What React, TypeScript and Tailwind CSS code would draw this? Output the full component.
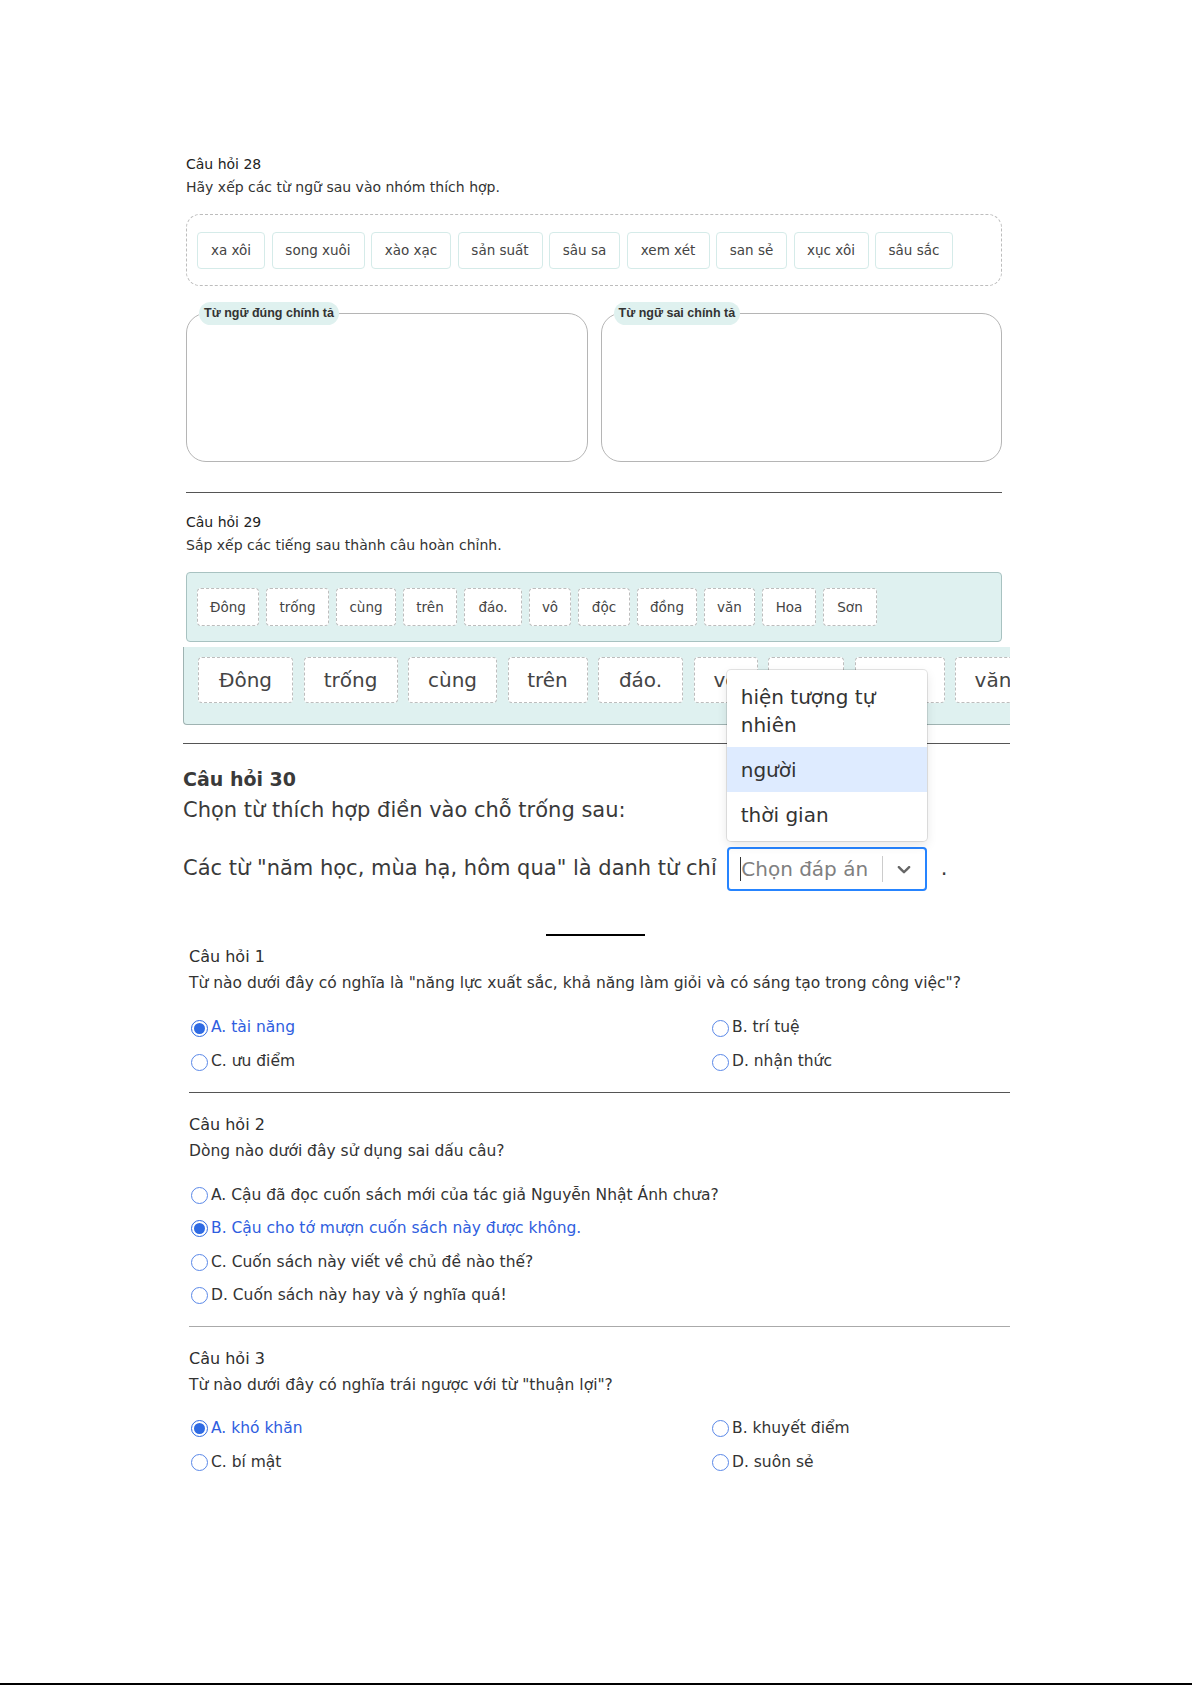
import React from 'react';

const words28 = [
    { t: 'xa xôi', w: 'w-[68px]' },
    { t: 'song xuôi', w: 'w-[93px]' },
    { t: 'xào xạc', w: 'w-[80px]' },
    { t: 'sản suất', w: 'w-[85px]' },
    { t: 'sâu sa', w: 'w-[71px]' },
    { t: 'xem xét', w: 'w-[83px]' },
    { t: 'san sẻ', w: 'w-[71px]' },
    { t: 'xục xôi', w: 'w-[75px]' },
    { t: 'sâu sắc', w: 'w-[78px]' },
];

const words29 = [
    { t: 'Đông', w: 'w-[62px]', big: 'w-[95px]' },
    { t: 'trống', w: 'w-[63px]', big: 'w-[94px]' },
    { t: 'cùng', w: 'w-[60px]', big: 'w-[89px]' },
    { t: 'trên', w: 'w-[54px]', big: 'w-[80px]' },
    { t: 'đáo.', w: 'w-[58px]', big: 'w-[85px]' },
    { t: 'vô', w: 'w-[42px]', big: 'w-[64px]' },
    { t: 'độc', w: 'w-[52px]', big: 'w-[76px]' },
    { t: 'đồng', w: 'w-[60px]', big: 'w-[90px]' },
    { t: 'văn', w: 'w-[51px]', big: 'w-[76px]' },
    { t: 'Hoa', w: 'w-[54px]', big: 'w-[80px]' },
    { t: 'Sơn', w: 'w-[54px]', big: 'w-[80px]' },
];

function Radio({ checked }: { checked?: boolean }) {
    return (
        <span className={`w-[17px] h-[17px] rounded-full flex items-center justify-center shrink-0 ${checked ? 'border-[1.5px] border-[#2f6be3]' : 'border border-[#5a88e8]'}`}>
            {checked && <span className="w-[11px] h-[11px] rounded-full bg-[#2f6be3]" />}
        </span>
    );
}

function Option({ label, checked }: { label: string; checked?: boolean }) {
    return (
        <div className="flex items-center gap-[3px] pl-[2px]">
            <Radio checked={checked} />
            <span className={`text-[15.5px] ${checked ? 'text-[#2f5ee0]' : 'text-[#333]'}`}>{label}</span>
        </div>
    );
}

function QuestionHead({ title, text, top }: { title: string; text: string; top: string }) {
    return (
        <>
            <h3 className={`${top} text-[16px] leading-[26px] text-[#2e2e2e]`}>{title}</h3>
            <p className="text-[15.5px] leading-[26px] text-[#333]">{text}</p>
        </>
    );
}

export default function App() {
    return (
        <div className="relative w-[1192px] h-[1685px] bg-white flex flex-col text-[#333] font-['DejaVu_Sans',sans-serif]">
            {/* Câu hỏi 28 */}
            <section className="ml-[186px] w-[816px] pt-[152px]">
                <h2 className="text-[14px] leading-[24px] text-[#222]">Câu hỏi 28</h2>
                <p className="text-[14px] leading-[22px]">Hãy xếp các từ ngữ sau vào nhóm thích hợp.</p>
                <div className="mt-[16px] h-[72px] border-[1.5px] border-dashed border-[#bdbdbd] rounded-[14px] pl-[10px] flex items-center gap-[6.5px]">
                    {words28.map(w => (
                        <div key={w.t} className={`${w.w} h-[37px] shrink-0 flex items-center justify-center border border-[#d5ebe9] rounded-[4px] text-[13.5px] text-[#444]`}>
                            {w.t}
                        </div>
                    ))}
                </div>
                <div className="mt-[16px] grid grid-cols-2 gap-[13px]">
                    {['Từ ngữ đúng chính tả', 'Từ ngữ sai chính tả'].map(l => (
                        <fieldset key={l} className="h-[160px] min-w-0 border-[1.5px] border-[#b5b5b5] rounded-[20px]">
                            <legend className="ml-[12px] px-[5px] h-[23px] leading-[23px] rounded-full bg-[#dff1ef] text-[12.5px] font-bold font-['Liberation_Sans',sans-serif] text-[#333]">
                                {l}
                            </legend>
                        </fieldset>
                    ))}
                </div>
                <div className="mt-[30px] border-t-[1.5px] border-[#555]" />
            </section>

            {/* Câu hỏi 29 */}
            <section className="ml-[186px] w-[816px]">
                <h2 className="mt-[17px] text-[14px] leading-[24px] text-[#222]">Câu hỏi 29</h2>
                <p className="text-[14px] leading-[22px]">Sắp xếp các tiếng sau thành câu hoàn chỉnh.</p>
                <div className="mt-[16px] h-[70px] bg-[#dff1f0] border border-[#a8c2c1] rounded-[4px] flex items-center pl-[10px] gap-[7px]">
                    {words29.map(w => (
                        <div key={w.t} className={`${w.w} h-[38px] shrink-0 flex items-center justify-center bg-white border border-dashed border-[#bdbdbd] rounded-[4px] text-[13.5px] text-[#444]`}>
                            {w.t}
                        </div>
                    ))}
                </div>
            </section>
            <div className="ml-[183px] w-[827px] mt-[5px] h-[78px] bg-[#dff1f0] border-l border-b border-[#9fb3b2] rounded-bl-[4px] overflow-hidden flex items-start pt-[10px] pl-[14px] gap-[10.5px]">
                {words29.map(w => (
                    <div key={w.t} className={`${w.big} h-[46px] shrink-0 flex items-center justify-center bg-white border border-dashed border-[#bdbdbd] rounded-[4px] text-[20px] text-[#444]`}>
                        {w.t}
                    </div>
                ))}
            </div>
            <div className="ml-[183px] w-[827px] mt-[18px] border-t-[1.5px] border-[#555]" />

            {/* Câu hỏi 30 */}
            <section className="ml-[183px]">
                <h2 className="mt-[21px] text-[19px] leading-[28px] font-bold text-[#3a3a3a]">Câu hỏi 30</h2>
                <p className="mt-[3px] text-[21px] leading-[28px] text-[#3a3a3a]">Chọn từ thích hợp điền vào chỗ trống sau:</p>
                <div className="mt-[23px] h-[44px] flex items-center text-[21px] text-[#3a3a3a]">
                    <span>Các từ "năm học, mùa hạ, hôm qua" là danh từ chỉ</span>
                    <div className="relative ml-[10px] w-[200px] h-[44px] border-2 border-[#2684ff] rounded-[4px] flex items-center">
                        <div className="flex-1 flex items-center pl-[11px]">
                            <span className="w-[1.5px] h-[24px] bg-[#333]" />
                            <span className="text-[20px] text-[#808080]">Chọn đáp án</span>
                        </div>
                        <span className="w-px h-[26px] bg-[#cccccc]" />
                        <div className="w-[42px] flex items-center justify-center text-[#666]">
                            <svg width="22" height="22" viewBox="0 0 20 20" fill="currentColor">
                                <path d="M4.516 7.548c0.436-0.446 1.043-0.481 1.576 0l3.908 3.747 3.908-3.747c0.533-0.481 1.141-0.446 1.574 0 0.436 0.445 0.408 1.197 0 1.615-0.406 0.418-4.695 4.502-4.695 4.502-0.217 0.223-0.502 0.335-0.787 0.335s-0.57-0.112-0.789-0.335c0 0-4.287-4.084-4.695-4.502s-0.436-1.17 0-1.615z" />
                            </svg>
                        </div>
                        <div className="absolute left-[-2px] bottom-[calc(100%+8px)] w-[200px] bg-white rounded-[4px] shadow-[0_0_0_1px_rgba(0,0,0,0.1),0_4px_11px_rgba(0,0,0,0.1)] py-[4px] z-10 text-[20px] leading-[28px] text-[#333]">
                            <div className="px-[14px] py-[8.5px]">hiện tượng tự nhiên</div>
                            <div className="px-[14px] py-[8.5px] bg-[#deebff]">người</div>
                            <div className="px-[14px] py-[8.5px]">thời gian</div>
                        </div>
                    </div>
                    <span className="ml-[14px]">.</span>
                </div>
            </section>
            <div className="ml-[546px] mt-[43px] w-[99px] h-[2px] bg-black" />

            {/* Câu hỏi 1 - 3 */}
            <section className="ml-[189px] w-[821px]">
                <QuestionHead top="mt-[8px]" title="Câu hỏi 1" text={'Từ nào dưới đây có nghĩa là "năng lực xuất sắc, khả năng làm giỏi và có sáng tạo trong công việc"?'} />
                <div className="mt-[15px] grid grid-cols-[521px_1fr] auto-rows-[34px]">
                    <Option checked label="A. tài năng" />
                    <Option label="B. trí tuệ" />
                    <Option label="C. ưu điểm" />
                    <Option label="D. nhận thức" />
                </div>
                <div className="mt-[13px] border-t-[1.5px] border-[#555]" />

                <QuestionHead top="mt-[19px]" title="Câu hỏi 2" text="Dòng nào dưới đây sử dụng sai dấu câu?" />
                <div className="mt-[15px] grid auto-rows-[33.3px]">
                    <Option label="A. Cậu đã đọc cuốn sách mới của tác giả Nguyễn Nhật Ánh chưa?" />
                    <Option checked label="B. Cậu cho tớ mượn cuốn sách này được không." />
                    <Option label="C. Cuốn sách này viết về chủ đề nào thế?" />
                    <Option label="D. Cuốn sách này hay và ý nghĩa quá!" />
                </div>
                <div className="mt-[14px] border-t-[1.5px] border-[#aaa]" />

                <QuestionHead top="mt-[19px]" title="Câu hỏi 3" text={'Từ nào dưới đây có nghĩa trái ngược với từ "thuận lợi"?'} />
                <div className="mt-[13px] grid grid-cols-[521px_1fr] auto-rows-[34px]">
                    <Option checked label="A. khó khăn" />
                    <Option label="B. khuyết điểm" />
                    <Option label="C. bí mật" />
                    <Option label="D. suôn sẻ" />
                </div>
            </section>

            <div className="mt-auto h-[2px] w-full bg-black" />
        </div>
    );
}
